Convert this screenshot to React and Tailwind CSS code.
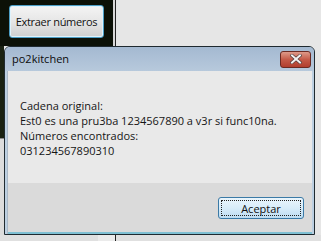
import React from "react";

const ui = { fontFamily: '"Open Sans", "Noto Sans", Arial, sans-serif' };

export default function App() {
  return (
    <div className="w-[321px] h-[241px] bg-[#e6e6e6] overflow-hidden flex flex-col text-[11px] text-[#111]" style={ui}>
      {/* Parent window strip */}
      <div className="flex h-[46px] shrink-0">
        <div className="w-[113px] bg-[#0c1107] pt-[5px] pl-[9px]">
          <button className="w-[95px] h-[33px] px-0 rounded-[3px] border border-[#4d9fc6] bg-gradient-to-b from-[#f4f4f4] via-[#e6e6e6] to-[#cfcfcf] shadow-[inset_0_0_0_1px_#dff2fb] text-[11px] tracking-[-0.3px] whitespace-nowrap text-[#111] leading-none">
            Extraer números
          </button>
        </div>
        <div className="w-[2px] bg-[#d8d8d8]" />
        <div className="w-[1px] bg-[#222]" />
        <div className="flex-1 bg-[#e6e6e6]" />
      </div>

      <div className="flex shrink-0">
        {/* Sliver of parent window left of the dialog */}
        <div className="w-[4px] flex flex-col">
          <div className="h-[92px] bg-[#1a2212]" />
          <div className="h-[1px] bg-[#8a8a8a]" />
          <div className="flex-1 bg-[#dcdcdc]" />
        </div>

        {/* Message box */}
        <div className="w-[311px] h-[189px] flex flex-col rounded-t-[6px] border border-[#1f2a30] bg-[#bccfe1] overflow-hidden">
          <div className="h-[24px] shrink-0 flex items-center justify-between pl-[7px] pr-[3px] bg-gradient-to-b from-[#a4b9d1] to-[#b7c9dc]">
            <span className="text-[11px] text-[#0b0b0b] pt-[1px]">po2kitchen</span>
            <div className="w-[31px] h-[17px] rounded-[3px] border border-[#6b2a22] bg-gradient-to-b from-[#dd9a8a] via-[#c45a48] to-[#b13e2e] flex items-center justify-center">
              <svg width="12" height="10" viewBox="0 0 12 10">
                <path d="M2 1.5 L10 8.5 M10 1.5 L2 8.5" stroke="#4a3a3a" strokeWidth="3.2" strokeLinecap="square" />
                <path d="M2 1.5 L10 8.5 M10 1.5 L2 8.5" stroke="#f4f1f1" strokeWidth="2" strokeLinecap="square" />
              </svg>
            </div>
          </div>
          <div className="flex-1 flex flex-col mx-[2px] border-l border-[#aab8c6]">
            <div className="h-[112px] bg-[#e9e9e9] pl-[12px] pt-[27px] leading-[15px] text-[#151515]">
              <div>Cadena original:</div>
              <div>Est0 es una pru3ba 1234567890 a v3r si func10na.</div>
              <div>Números encontrados:</div>
              <div>031234567890310</div>
            </div>
            <div className="flex-1 bg-[#dadada] flex justify-end items-start pt-[14px] pr-[8px]">
              <button className="w-[86px] h-[22px] rounded-[3px] border border-[#3b7aa6] bg-gradient-to-b from-[#eaf5fc] via-[#d8ecf9] to-[#bcdcf2] p-[2px]">
                <div className="w-full h-full border border-dotted border-[#222] flex items-center justify-center text-[11px] text-[#111] leading-none">
                  Aceptar
                </div>
              </button>
            </div>
            <div className="h-[2px] bg-[#7fc0d3]" />
          </div>
        </div>
        <div className="flex-1 bg-[#e6e6e6]" />
      </div>

      {/* Below dialog */}
      <div className="flex-1 flex bg-[#e0e0e0]">
        <div className="w-[98px]" />
        <div className="w-[17px] bg-[#ebebeb]" />
        <div className="w-[1px] bg-[#222]" />
      </div>
    </div>
  );
}
